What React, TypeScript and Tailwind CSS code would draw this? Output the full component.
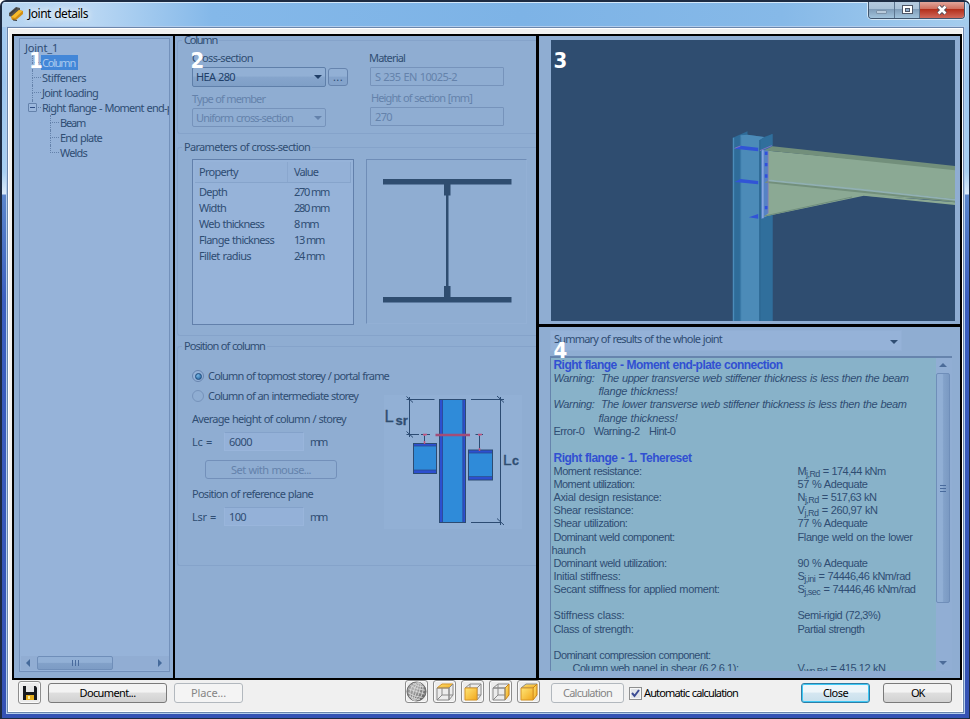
import { useLayoutEffect, useRef, useState } from "react";
import type { ReactNode } from "react";

/** Single line of text, tracked so that it occupies `w` pixels. */
function Fit({ w, className = "", children }: { w?: number; className?: string; children: ReactNode }) {
  const ref = useRef<HTMLSpanElement>(null);
  const [ls, setLs] = useState(0);
  useLayoutEffect(() => {
    const el = ref.current;
    if (!el || !w) return;
    const n = (el.textContent || "").length;
    const natural = el.getBoundingClientRect().width - ls * n;
    setLs((w - natural) / n);
  }, [w]);
  return (
    <span ref={ref} className={`inline-block shrink-0 whitespace-pre ${className}`} style={{ letterSpacing: `${ls}px` }}>
      {children}
    </span>
  );
}

function Arrow({ dir, className = "" }: { dir: "up" | "down" | "left" | "right"; className?: string }) {
  const d = { up: "M0 5L4 1L8 5z", down: "M0 2H8L4 6z", left: "M5 0V8L1 4z", right: "M2 0V8L6 4z" }[dir];
  return (
    <svg width="8" height="8" viewBox="0 0 8 8" className={`shrink-0 ${className}`}>
      <path d={d} fill="currentColor" />
    </svg>
  );
}

function TreeItem({ label, w, depth, last, selected, box }: { label: string; w: number; depth: number; last?: boolean; selected?: boolean; box?: boolean }) {
  return (
    <div className={`flex h-[15px] items-center ${depth === 2 ? "pl-[29px]" : "pl-[11px]"}`}>
      <div className="flex h-full w-[9px] shrink-0 flex-col">
        <div className="h-[8px] border-b border-l border-dotted border-[#6482ab]" />
        <div className={`flex-1 border-dotted border-[#6482ab] ${last || box ? "" : "border-l"}`} />
      </div>
      {box && (
        <div className="relative -ml-[13px] mr-1 flex size-[9px] shrink-0 items-center justify-center rounded-[1px] border border-[#6482ab] bg-[#9bb7dc]">
          <div className="h-px w-[5px] bg-[#2f4d83]" />
        </div>
      )}
      <div className={`flex h-[15px] items-center pl-px pr-[3px] ${selected ? "bg-[#4387d8] text-[#a9c9ee]" : ""}`}>
        <Fit w={w}>{label}</Fit>
      </div>
    </div>
  );
}

function Group({ title, w, className, children }: { title: string; w: number; className: string; children: ReactNode }) {
  return (
    <section className="pl-[2px]">
      <div className="relative z-10 ml-[5px] flex h-[14px] w-fit items-center bg-[#8fadd2] px-[2px]">
        <Fit w={w}>{title}</Fit>
      </div>
      <div className={`-mt-[7px] rounded-l-[3px] border border-r-0 border-[#85a3ca] pl-[14px] ${className}`}>{children}</div>
    </section>
  );
}

const properties: [string, number, string, number][] = [
  ["Depth", 28, "270 mm", 35],
  ["Width", 27, "280 mm", 35],
  ["Web thickness", 65, "8 mm", 24],
  ["Flange thickness", 75, "13 mm", 30],
  ["Fillet radius", 52, "24 mm", 30],
];

function ColumnDiagram() {
  return (
    <svg width="138" height="134" viewBox="384 395 138 134" className="shrink-0">
      <rect x="384" y="395" width="138" height="134" fill="#92b0d5" />
      <g stroke="#2c4b72" strokeWidth="1" fill="none">
        <path d="M409.5 397V437M406.5 399.5H434.5M406.5 434.5H419M421 434.5H430M406.5 396.5L413 402.5M406.5 431.5L413 437.5" />
        <path d="M471 399.5H504M500.5 397V525M471 522.5H500M497 396L504 402.5M497 518.5L504 525M424.5 436V443M479.5 436V450M475.500 434.500H483" />
        <rect x="413.5" y="443.500" width="23" height="30" fill="#2c4fd0" />
        <rect x="468.500" y="450" width="24" height="30" fill="#2c4fd0" />
        <rect x="439.500" y="399.500" width="26" height="123" fill="#2c4fd0" />
      </g>
      <rect x="414" y="446" width="22" height="24" fill="#2f8bd9" />
      <rect x="469" y="453" width="23" height="24" fill="#2f8bd9" />
      <rect x="443" y="400" width="19.500" height="122" fill="#2f8bd9" />
      <path d="M442.500 400V522M463 400V522M414 446H436M414 470H436M469 453H492M469 476.500H492" stroke="#2c4b90" strokeWidth="0.8" />
      <path d="M435.500 435H470" stroke="#a34d78" strokeWidth="2.500" />
      <path d="M423 434.500H427M478 434.500H482M424.500 434V436M479.500 434V436M424.500 441V444M479.500 448V451" stroke="#bb527e" strokeWidth="1.500" />
      <g fill="#2f4d70" stroke="#2f4d70" strokeWidth=".3" className="font-['Liberation_Sans',sans-serif]">
        <text x="384.500" y="422" fontSize="16.500">L</text>
        <text x="395.500" y="424.500" fontSize="13" fontWeight="700">sr</text>
        <text x="503" y="465" fontSize="15.500">L</text>
        <text x="512" y="465" fontSize="12.500" fontWeight="700">c</text>
      </g>
    </svg>
  );
}

function JointView() {
  return (
    <svg viewBox="0 0 404 281" width="404" height="281" className="block bg-[#2f4d70]">
      <g transform="translate(149.500 70) scale(.333333)">
        <path d="M97 83L141 64V74L191 81L216 72V640H97z" fill="#2f6c99" />
        <path d="M120 76L141 74L191 81L178 90V640H120z" fill="#4c8bb8" />
        <path d="M97 83H101V640H97z" fill="#4b8cba" />
        <path d="M120 80V640" stroke="#3a79a7" strokeWidth="4" />
        <path d="M178 90L216 72V640H178z" fill="#306f9c" />
        <path d="M178 90V640" stroke="#28618e" strokeWidth="3" />
        <path d="M102 116L120 107L173 113V124zM102 216L120 207L173 213V223zM145 322L173 312V326z" fill="#3154d6" />
        <path d="M102 115L120 108M178 122L214 107" stroke="#7e72c4" strokeWidth="3" />
        <path d="M182 121L204 118V316L182 327z" fill="#5682c4" />
        <path d="M187 121V325" stroke="#86a5df" strokeWidth="5" />
        <path d="M203 122L765 176V272L490 257L190 320L203 310z" fill="#8ba994" />
        <path d="M192 121L216 109L765 168V181z" fill="#728f7b" />
        <path d="M192 218L205 209L765 267V277z" fill="#728f7b" />
        <path d="M203 211L480 239L765 270" fill="none" stroke="#91b0b3" strokeWidth="5" />
        <path d="M480 253L765 277V285L497 258z" fill="#8ba994" />
        <path d="M192 318L455 261" stroke="#708f7c" strokeWidth="3" />
        <path d="M203 124V310" stroke="#9379be" strokeWidth="2" />
        <path d="M197 125V135M197 159V169M197 193V203M197 288V298" stroke="#3050dd" strokeWidth="8" />
      </g>
    </svg>
  );
}

function Result({ label, w, sym, sub, value, vw, indent }: { label: string; w: number; sym?: string; sub?: string; value?: string; vw?: number; indent?: boolean }) {
  return (
    <div className={`flex h-[13.15px] items-center ${indent ? "pl-[19px]" : ""}`}>
      <div className={`shrink-0 ${indent ? "w-[225px]" : "w-[244px]"}`}>
        <Fit w={w}>{label}</Fit>
      </div>
      {value && (
        <Fit w={vw}>
          {sym}
          {sub && <span className="relative top-[2px] text-[9px] leading-none">{sub}</span>}
          {value}
        </Fit>
      )}
    </div>
  );
}

const heading = "flex h-[13.15px] items-center text-[12px] font-bold text-[#3150d2]";
const btn = "flex items-center justify-center rounded-[3px] border";

function Results() {
  return (
    <div className="min-w-0 flex-1 overflow-hidden pl-[2.5px] pt-px font-['Liberation_Sans',sans-serif] text-[11px] leading-[13px] text-[#2f4d73] [word-spacing:0.5px]">
      <div className={heading}><Fit w={229}>Right flange - Moment end-plate connection</Fit></div>
      {[["upper", 355], ["lower", 353]].map(([word, w]) => (
        <div key={word} className="italic">
          <div className="flex h-[13.15px] items-center"><Fit w={Number(w)}>{`Warning:  The ${word} transverse web stiffener thickness is less then the beam`}</Fit></div>
          <div className="flex h-[13.15px] items-center pl-[45px]"><Fit w={79}>flange thickness!</Fit></div>
        </div>
      ))}
      <div className="flex h-[27px] items-start"><Fit w={122}>{"Error-0   Warning-2   Hint-0"}</Fit></div>
      <div className={heading}><Fit w={138}>Right flange - 1. Tehereset</Fit></div>
      <Result label="Moment resistance:" w={88} sym="M" sub="j,Rd" value=" = 174,44 kNm" vw={88} />
      <Result label="Moment utilization:" w={81} value="57 % Adequate" vw={70} />
      <Result label="Axial design resistance:" w={108} sym="N" sub="j,Rd" value=" = 517,63 kN" vw={79} />
      <Result label="Shear resistance:" w={80} sym="V" sub="j,Rd" value=" = 260,97 kN" vw={80} />
      <Result label="Shear utilization:" w={74} value="77 % Adequate" vw={70} />
      <Result label="Dominant weld component:" w={121} value="Flange weld on the lower" vw={115} />
      <div className="-ml-[2px] flex h-[13.15px] items-center"><Fit w={34}>haunch</Fit></div>
      <Result label="Dominant weld utilization:" w={113} value="90 % Adequate" vw={70} />
      <Result label="Initial stiffness:" w={67} sym="S" sub="j,ini" value=" = 74446,46 kNm/rad" vw={113} />
      <Result label="Secant stiffness for applied moment:" w={166} sym="S" sub="j,sec" value=" = 74446,46 kNm/rad" vw={118} />
      <div className="h-[13.15px]" />
      <Result label="Stiffness class:" w={71} value="Semi-rigid (72,3%)" vw={83} />
      <Result label="Class of strength:" w={80} value="Partial strength" vw={67} />
      <div className="h-[13.15px]" />
      <Result label="Dominant compression component:" w={157} />
      <Result label="Column web panel in shear (6.2.6.1):" w={166} sym="V" sub="wp,Rd" value=" = 415,12 kN" vw={88} indent />
    </div>
  );
}

function Cube({ face }: { face: "top" | "front" | "side" | "solid" }) {
  const fill = (f: string) => (face === f || face === "solid" ? "url(#amber)" : "none");
  return (
    <svg width="20" height="20" viewBox="0 0 20 20">
      <defs>
        <linearGradient id="amber" x1="0" y1="0" x2="1" y2="1">
          <stop offset="0" stopColor="#ffe678" />
          <stop offset="1" stopColor="#f1a71b" />
        </linearGradient>
      </defs>
      <g stroke="#8a8a8a" strokeWidth="1" strokeLinejoin="round">
        {face !== "solid" && <path d="M7 2V13L2 18M7 13H18" fill="none" />}
        <path d="M2 6L7 2H18L14 6z" fill={fill("top")} stroke={face === "top" ? "#d89525" : "#8a8a8a"} />
        <path d="M14 6L18 2V13L14 18z" fill={fill("side")} stroke={face === "side" || face === "solid" ? "#c98213" : "#8a8a8a"} />
        <path d="M2 6H14V18H2z" fill={fill("front")} stroke={face === "front" || face === "solid" ? "#d89525" : "#8a8a8a"} />
      </g>
    </svg>
  );
}

function Globe() {
  return (
    <svg width="21" height="21" viewBox="0 0 22 22" className="shrink-0">
      <defs>
        <radialGradient id="ball" cx=".35" cy=".3" r=".75">
          <stop offset="0" stopColor="#b5b5b5" />
          <stop offset="1" stopColor="#666" />
        </radialGradient>
      </defs>
      <circle cx="11" cy="11" r="10" fill="url(#ball)" stroke="#6d6d6d" />
      <g fill="none" stroke="#dcdcdc" strokeWidth=".8" transform="rotate(18 11 11)">
        <ellipse cx="11" cy="11" rx="3" ry="9.500" />
        <ellipse cx="11" cy="11" rx="6.500" ry="9.500" />
        <path d="M11 2V20M2 11H20M3 7Q11 9 19 7M5 4Q11 6 17 4M3 15Q11 17 19 15M5 18Q11 19 17 18" />
      </g>
    </svg>
  );
}

const toolBtn = "flex h-[23px] w-[23px] items-center justify-center rounded-[3px] border border-[#8d8d8d] bg-[#ececec] shadow-[inset_0_0_0_1px_#fafafa]";
const badge = "absolute z-20 font-['DejaVu_Sans_Condensed','DejaVu_Sans',sans-serif] text-[22px] font-bold leading-[22px] text-white";

export default function App() {
  return (
    <div className="flex h-[719px] w-[970px] flex-col overflow-hidden rounded-t-[6px] border-b border-l-2 border-r border-t-2 border-[#1d2b42] bg-[linear-gradient(180deg,#a5cbf0_0,#9cc5ee_80px,#a9d0f2_170px,#dcebfa_192px,#5b86cc_193px,#3b5fc0_300px,#3452b4_100%)] font-['Noto_Sans',sans-serif] text-[11px] leading-[14px] text-[#2f4d73] [word-spacing:0.6px]">
      <header className="flex h-[25px] shrink-0 items-start justify-between bg-[linear-gradient(90deg,#b7d5f1_0,#b9d7f3_90px,#84b8e9_210px,#7db3e6_520px,#86b9e8_780px,#a5cdee_100%)] pl-[6px] pr-[4px] shadow-[inset_0_1px_0_#d4e8fa]">
        <div className="flex items-center gap-[4px] pt-[4px]">
          <svg width="16" height="16" viewBox="0 0 16 16">
            <path d="M1 7L8 1L12 2L12 4L4 11L1 10z" fill="#55534f" />
            <path d="M3 11L11 4L15 5L15 8L8 14L4 14z" fill="#d18d12" />
            <path d="M3 11L11 4L14.500 5L7 12z" fill="#f7bb2b" />
            <path d="M2 8L9 2M5 14L9 14.500" stroke="#3c3c3c" strokeWidth="1.200" />
          </svg>
          <Fit w={60} className="text-[12px] leading-[16px] text-black [text-shadow:0_0_6px_#fff,0_0_8px_#fff]">Joint details</Fit>
        </div>
        <div className="-mt-px flex h-[18px] overflow-hidden rounded-b-[4px] border border-t-0 border-[#40556e] shadow-[0_0_0_1px_#d5e8f8]">
          <div className="flex w-[26px] items-center justify-center border-r border-[#5c7590] bg-[linear-gradient(#b7cce0_0,#a9c1d8_45%,#809db9_50%,#a2c3dc_100%)]">
            <div className="mt-[5px] h-[4px] w-[11px] rounded-[1px] border border-[#7c92a8] bg-[#b9cbdc]" />
          </div>
          <div className="flex w-[25px] items-center justify-center border-r border-[#5c7590] bg-[linear-gradient(#b7cce0_0,#a9c1d8_45%,#809db9_50%,#a2c3dc_100%)]">
            <div className="flex h-[9px] w-[11px] items-center justify-center border border-[#4d5566] bg-white">
              <div className="h-[4px] w-[5px] border border-[#4d5566] bg-[#92aecb]" />
            </div>
          </div>
          <div className="flex w-[44px] items-center justify-center bg-[linear-gradient(#e4aea4_0,#d0705f_45%,#b3301c_50%,#d0685a_100%)]">
            <svg width="12" height="10" viewBox="0 0 12 10">
              <path d="M2.500 1.500L9.500 8.500M9.500 1.500L2.500 8.500" stroke="#4f4d5a" strokeWidth="4.500" />
              <path d="M2.500 1.500L9.500 8.500M9.500 1.500L2.500 8.500" stroke="#fff" strokeWidth="2.600" />
            </svg>
          </div>
        </div>
      </header>

      <div className="mx-[5px] mb-[5px] flex min-h-0 flex-1 flex-col border border-[#6a86ac] bg-[#f0f0f0] pl-[4px] pt-[6px] shadow-[inset_0_0_0_1px_#fff,0_0_0_1px_#b3cdec]">
        <main className="grid h-[646px] w-[950px] shrink-0 grid-cols-[159px_362px_421px] gap-x-[2px] bg-black p-[2px]">
          <div className="relative bg-[#8fadd2] p-[2px_3px_6px_5px]">
            <span className={`${badge} left-[15px] top-[14px]`}>1</span>
            <div className="flex h-[634px] flex-col overflow-hidden border border-[#7391bb] bg-[#96b3d9] pl-px pt-px">
              <div className="flex h-[15px] items-center pl-[4px]"><Fit w={33}>Joint_1</Fit></div>
              <TreeItem label="Column" w={33} depth={1} selected />
              <TreeItem label="Stiffeners" w={44} depth={1} />
              <TreeItem label="Joint loading" w={56} depth={1} />
              <TreeItem label="Right flange - Moment end-plate" w={147} depth={1} box />
              <TreeItem label="Beam" w={25} depth={2} />
              <TreeItem label="End plate" w={42} depth={2} />
              <TreeItem label="Welds" w={27} depth={2} last />
              <div className="flex-1" />
              <div className="mb-px flex h-[14px] items-center bg-[#91add3] pl-[4px] pr-[5px] text-[#456a9b]">
                <Arrow dir="left" />
                <div className="ml-[4px] flex h-[14px] w-[76px] items-center justify-center gap-[2px] rounded-[2px] border border-[#6f8eb9] bg-[linear-gradient(#92b0d6_45%,#82a1c9_50%,#7d9cc5)]">
                  <i className="h-[6px] w-px bg-[#496b9d]" />
                  <i className="h-[6px] w-px bg-[#496b9d]" />
                  <i className="h-[6px] w-px bg-[#496b9d]" />
                </div>
                <Arrow dir="right" className="ml-auto" />
              </div>
            </div>
          </div>

          <div className="relative overflow-hidden border-r border-black bg-[#8fadd2]">
            <span className={`${badge} left-[15.5px] top-[14px]`}>2</span>
            <div className="-mt-[3px]">
              <Group title="Column" w={33} className="h-[94px] pt-[10px]">
                <div className="flex">
                  <div className="w-[177px]">
                    <div className="h-[14px]"><Fit w={61}>Cross-section</Fit></div>
                    <div className="mt-[2px] flex h-[20px] items-center gap-[2px]">
                      <div className="flex h-[20px] w-[134px] items-center justify-between rounded-[2px] border border-[#5f7fa9] bg-[linear-gradient(#92b0d5_45%,#86a5cc_50%,#7f9fc7)] pl-[3px] pr-[3px] text-[#203f68]">
                        <Fit w={39}>HEA 280</Fit><Arrow dir="down" />
                      </div>
                      <div className={`${btn} h-[18px] w-[20px] border-[#6684ae] bg-[linear-gradient(#92b0d5_45%,#84a3cb_50%)]`}><Fit w={10}>...</Fit></div>
                    </div>
                    <div className="mt-[5px] h-[14px] text-[#6482ab]"><Fit w={73}>Type of member</Fit></div>
                    <div className="mt-[2px] flex h-[19px] w-[134px] items-center justify-between rounded-[2px] border border-[#7693bb] pl-[3px] pr-[3px] text-[#6482ab]">
                      <Fit w={97}>Uniform cross-section</Fit><Arrow dir="down" />
                    </div>
                  </div>
                  <div>
                    <div className="h-[14px]"><Fit w={36}>Material</Fit></div>
                    <div className="ml-px mt-[2px] flex h-[19px] w-[134px] items-center rounded-[1px] border border-[#7693bb] pl-[4px] text-[#6482ab]"><Fit w={82}>S 235 EN 10025-2</Fit></div>
                    <div className="mt-[5px] h-[14px] pl-[2px] text-[#6482ab]"><Fit w={101}>Height of section [mm]</Fit></div>
                    <div className="ml-px mt-[2px] flex h-[19px] w-[134px] items-center rounded-[1px] border border-[#7693bb] pl-[4px] text-[#6482ab]"><Fit w={17}>270</Fit></div>
                  </div>
                </div>
              </Group>
            </div>
            <div className="mt-[6px]">
              <Group title="Parameters of cross-section" w={126} className="flex h-[189px] gap-[12px] pt-[11px]">
                <div className="h-[166px] w-[162px] border border-[#6280ab] bg-[#96b3d9] p-[2px]">
                  <div className="flex h-[21px] items-center border-b border-r border-[#86a4cb] bg-[#94b1d7] pl-[4px]">
                    <div className="mr-[6px] h-full w-[89px] border-r border-[#8aa7ce] pt-[3px]"><Fit w={39}>Property</Fit></div>
                    <Fit w={24}>Value</Fit>
                  </div>
                  <div className="pt-px">
                    {properties.map(([name, w, value, vw]) => (
                      <div key={name} className="flex h-[16px] items-center pl-[4px]">
                        <div className="w-[95px]"><Fit w={w}>{name}</Fit></div>
                        <Fit w={vw}>{value}</Fit>
                      </div>
                    ))}
                  </div>
                </div>
                <div className="h-[165px] w-[161px] border border-b-[#93b0d5] border-l-[#6f8db7] border-r-[#93b0d5] border-t-[#6f8db7]">
                  <svg width="159" height="163" viewBox="367 160 159 163">
                    <path d="M383 179H511.500V184.500H450.500V195.500H448.500V286H450.500V297H511.500V302.500H383V297H444V286H446V195.500H444V184.500H383z" fill="#2f4d70" />
                  </svg>
                </div>
              </Group>
            </div>
            <div className="mt-[3px]">
              <Group title="Position of column" w={81} className="h-[220px] pt-[22px]">
                <div className="flex h-[14px] items-center">
                  <div className="mr-[4px] flex size-[12px] items-center justify-center rounded-full border border-[#6885af] bg-[#96b3d9]">
                    <div className="size-[7px] rounded-full border border-[#1f4c7d] bg-[radial-gradient(circle_at_35%_30%,#76b6e5,#1f5c98)]" />
                  </div>
                  <Fit w={181}>Column of topmost storey / portal frame</Fit>
                </div>
                <div className="flex h-[190px]">
                  <div className="w-[192px] pt-[6px]">
                    <div className="flex h-[14px] items-center">
                      <div className="mr-[4px] size-[12px] rounded-full border border-[#7693bb]" />
                      <Fit w={150}>Column of an intermediate storey</Fit>
                    </div>
                    <div className="mt-[9px] h-[14px]"><Fit w={154}>Average height of column / storey</Fit></div>
                    <div className="mt-[6px] flex h-[19px] items-center">
                      <div className="w-[32px]"><Fit w={20}>Lc =</Fit></div>
                      <div className="mr-[6px] flex h-[19px] w-[80px] items-center border border-[#99b5db] border-t-[#84a2ca] bg-[#94b1d8] pl-[4px]"><Fit w={23}>6000</Fit></div>
                      <Fit w={16}>mm</Fit>
                    </div>
                    <div className={`${btn} ml-[13px] mt-[9px] h-[19px] w-[132px] border-[#7390ba] text-[#6482ab]`}><Fit w={80}>Set with mouse...</Fit></div>
                    <div className="mt-[8px] h-[14px]"><Fit w={121}>Position of reference plane</Fit></div>
                    <div className="mt-[6px] flex h-[19px] items-center">
                      <div className="w-[32px]"><Fit w={24}>Lsr =</Fit></div>
                      <div className="mr-[6px] flex h-[19px] w-[80px] items-center border border-[#99b5db] border-t-[#84a2ca] bg-[#94b1d8] pl-[4px]"><Fit w={17}>100</Fit></div>
                      <Fit w={16}>mm</Fit>
                    </div>
                  </div>
                  <div className="pt-[12px]"><ColumnDiagram /></div>
                </div>
              </Group>
            </div>
          </div>

          <div className="grid grid-rows-[288px_351px] gap-[3px]">
            <div className="relative bg-[#8fadd2] pl-[11.5px] pt-[4px]">
              <span className={`${badge} left-[14.5px] top-[14px]`}>3</span>
              <JointView />
            </div>
            <div className="relative overflow-hidden bg-[#8fadd2] pl-[11px] pt-[3px]">
              <span className={`${badge} left-[14.5px] top-[13px]`}>4</span>
              <div className="flex h-[21px] w-[352px] items-start justify-between border border-[#92afd5] bg-[#95b2d8] pl-[3px] pr-[3px] pt-px">
                <Fit w={168}>Summary of results of the whole joint</Fit>
                <Arrow dir="down" className="mt-[6px]" />
              </div>
              <div className="mt-[5px] flex h-[315px] w-[402px] border-l border-t-2 border-[#6684ad] bg-[#88b2c9]">
                <Results />
                <div className="flex w-[16px] shrink-0 flex-col items-center bg-[#91aed4] py-[4px] pr-[2px] text-[#4c6c99]">
                  <Arrow dir="up" />
                  <div className="mt-[3px] flex h-[230px] w-[14px] flex-col items-center justify-center gap-[2px] rounded-[2px] border border-[#6f8eb9] bg-[linear-gradient(90deg,#91afd5_45%,#83a2ca_55%,#7b9ac3)]">
                    <i className="h-px w-[6px] bg-[#496b9d]" />
                    <i className="h-px w-[6px] bg-[#496b9d]" />
                    <i className="h-px w-[6px] bg-[#496b9d]" />
                  </div>
                  <Arrow dir="down" className="mt-auto" />
                </div>
              </div>
            </div>
          </div>
        </main>

        <footer className="flex h-[23px] items-start pl-[6px] text-black">
          <div className={`${toolBtn} mt-px`}>
            <svg width="14" height="14" viewBox="0 0 14 14">
              <path d="M0 0H12.500L14 1.500V14H0z" fill="#17191d" />
              <path d="M3 0H11V6H3z" fill="#e7e7e7" />
              <path d="M3 9H11V14H3z" fill="#e5ad1c" />
              <path d="M5 10H7V13H5z" fill="#fff2a5" />
            </svg>
          </div>
          <div className={`${btn} ml-[7px] mt-[3px] h-[20px] w-[119px] border-[#7a7a7a] bg-[linear-gradient(#f3f3f3_45%,#dedede_50%,#d2d2d2)]`}><Fit w={56}>Document...</Fit></div>
          <div className={`${btn} ml-[7px] mt-[3px] h-[20px] w-[69px] border-[#b2b8be] bg-[#f4f4f4] text-[#858585]`}><Fit w={35}>Place...</Fit></div>
          <div className="ml-[162px] flex gap-[5px]">
            <div className={toolBtn}><Globe /></div>
            <div className={toolBtn}><Cube face="top" /></div>
            <div className={toolBtn}><Cube face="front" /></div>
            <div className={toolBtn}><Cube face="side" /></div>
            <div className={toolBtn}><Cube face="solid" /></div>
          </div>
          <div className={`${btn} ml-[11px] mt-[3px] h-[20px] w-[73px] border-[#b2b8be] bg-[#f4f4f4] text-[#858585]`}><Fit w={49}>Calculation</Fit></div>
          <div className="ml-[5px] mt-[7px] flex size-[13px] items-center justify-center border border-[#8e8f8f] bg-[#e3e6ea] shadow-[inset_0_0_0_1px_#f6f6f6]">
            <svg width="9" height="9" viewBox="0 0 9 9"><path d="M1 4L3.500 7L8 1" fill="none" stroke="#3c4c94" strokeWidth="2" /></svg>
          </div>
          <Fit w={94} className="ml-[2px] mt-[6px]">Automatic calculation</Fit>
          <div className={`${btn} ml-[63px] mt-[3px] h-[20px] w-[69px] border-[#2e7ea6] bg-[linear-gradient(#eef6fa_45%,#d5e7f1_50%,#c9e0ec)] shadow-[inset_0_0_0_1px_#3dc8f5]`}><Fit w={25}>Close</Fit></div>
          <div className={`${btn} ml-[13px] mt-[3px] h-[20px] w-[69px] border-[#7a7a7a] bg-[linear-gradient(#f3f3f3_45%,#dedede_50%,#d2d2d2)]`}><Fit w={13}>OK</Fit></div>
        </footer>
      </div>
    </div>
  );
}
